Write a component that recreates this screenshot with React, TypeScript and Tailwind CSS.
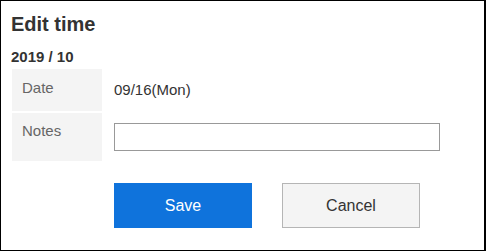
export default function App() {
  return (
    <div className="w-[486px] h-[251px] border-l border-t border-b border-r-2 border-black bg-white text-[#333] font-['Liberation_Sans',Arial,sans-serif]">
      <div className="pl-[10px] pt-[11px]">
        <h1 className="text-[20px] leading-[24px] font-bold">Edit time</h1>
        <div className="mt-[12px] text-[15px] leading-[18px] font-bold">2019 / 10</div>
        <div className="mt-[3px] ml-[1px] flex flex-col gap-[2px]">
          <div className="flex h-[42px]">
            <div className="w-[90px] bg-[#f4f4f4] pl-[10px] pt-[9px] text-[15px] leading-[20px] text-[#666]">Date</div>
            <div className="flex items-center pl-[12px] text-[15px] leading-[20px]">09/16(Mon)</div>
          </div>
          <div className="flex h-[48px]">
            <div className="w-[90px] bg-[#f4f4f4] pl-[10px] pt-[8px] text-[15px] leading-[20px] text-[#666]">Notes</div>
            <div className="flex items-center pl-[12px]">
              <input type="text" className="w-[326px] h-[28px] border border-[#999] bg-white outline-none px-2 text-[14px]" />
            </div>
          </div>
        </div>
        <div className="mt-[22px] ml-[103px] flex gap-[30px]">
          <button className="w-[138px] h-[45px] bg-[#0f73dc] text-white text-[16px]">Save</button>
          <button className="w-[138px] h-[45px] bg-[#f4f4f4] border border-[#b5b5b5] text-[16px] text-[#333]">Cancel</button>
        </div>
      </div>
    </div>
  );
}
